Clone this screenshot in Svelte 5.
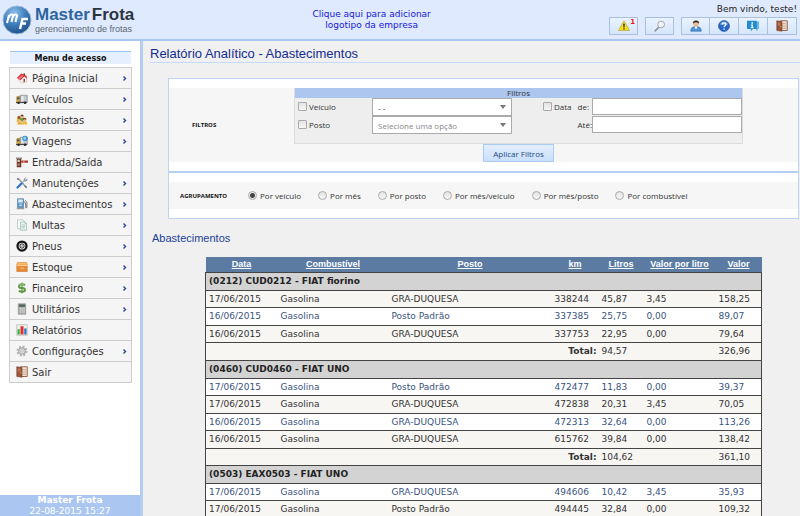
<script>
  const menu = [
    { icon: "home", label: "Página Inicial", sub: true },
    { icon: "truck", label: "Veículos", sub: true },
    { icon: "drivers", label: "Motoristas", sub: true },
    { icon: "trip", label: "Viagens", sub: true },
    { icon: "gate", label: "Entrada/Saída", sub: false },
    { icon: "tools", label: "Manutenções", sub: true },
    { icon: "pump", label: "Abastecimentos", sub: true },
    { icon: "papers", label: "Multas", sub: true },
    { icon: "tire", label: "Pneus", sub: true },
    { icon: "box", label: "Estoque", sub: true },
    { icon: "money", label: "Financeiro", sub: true },
    { icon: "calc", label: "Utilitários", sub: true },
    { icon: "chart", label: "Relatórios", sub: false },
    { icon: "gear", label: "Configurações", sub: true },
    { icon: "door", label: "Sair", sub: false },
  ];

  const userButtons = [
    { icon: "user", label: "Meus dados" },
    { icon: "help", label: "Ajuda" },
    { icon: "info", label: "Informações" },
    { icon: "door", label: "Sair" },
  ];

  const agrupamentos = [
    "Por veículo",
    "Por mês",
    "Por posto",
    "Por mês/veículo",
    "Por mês/posto",
    "Por combustível",
  ];

  const colunas = ["Data", "Combustível", "Posto", "km", "Litros", "Valor por litro", "Valor"];

  const grupos = [
    {
      titulo: "(0212) CUD0212 - FIAT fiorino",
      linhas: [
        ["17/06/2015", "Gasolina", "GRA-DUQUESA", "338244", "45,87", "3,45", "158,25"],
        ["16/06/2015", "Gasolina", "Posto Padrão", "337385", "25,75", "0,00", "89,07"],
        ["16/06/2015", "Gasolina", "GRA-DUQUESA", "337753", "22,95", "0,00", "79,64"],
      ],
      primeiraAzul: false,
      total: ["94,57", "326,96"],
    },
    {
      titulo: "(0460) CUD0460 - FIAT UNO",
      linhas: [
        ["17/06/2015", "Gasolina", "Posto Padrão", "472477", "11,83", "0,00", "39,37"],
        ["17/06/2015", "Gasolina", "GRA-DUQUESA", "472838", "20,31", "3,45", "70,05"],
        ["16/06/2015", "Gasolina", "GRA-DUQUESA", "472313", "32,64", "0,00", "113,26"],
        ["16/06/2015", "Gasolina", "GRA-DUQUESA", "615762", "39,84", "0,00", "138,42"],
      ],
      primeiraAzul: true,
      total: ["104,62", "361,10"],
    },
    {
      titulo: "(0503) EAX0503 - FIAT UNO",
      linhas: [
        ["17/06/2015", "Gasolina", "GRA-DUQUESA", "494606", "10,42", "3,45", "35,93"],
        ["17/06/2015", "Gasolina", "Posto Padrão", "494445", "32,84", "0,00", "109,32"],
      ],
      primeiraAzul: true,
      total: null,
    },
  ];

  let agrupamento = $state("Por veículo");
  let veiculo = $state("");
  let posto = $state("");
  let usarVeiculo = $state(false);
  let usarPosto = $state(false);
  let usarData = $state(false);
  let dataDe = $state("");
  let dataAte = $state("");

  function azul(grupo, i) {
    return grupo.primeiraAzul ? i % 2 === 0 : i % 2 === 1;
  }
</script>

{#snippet icone(name)}
  <svg class="icon" viewBox="0 0 16 16" aria-hidden="true">
    {#if name === "home"}
      <path d="M4 8l7-3 3 3v5l-6 2-4-3z" fill="#f6f1ef" stroke="#b9a9a5" stroke-width=".6" />
      <path d="M1 8l6-6 7 3 1 4-4-3-5 5z" fill="#d3353a" />
      <path d="M3 8l5-4 2 1-5 5z" fill="#f07c7c" />
      <path d="M10 9h2v4l-2 1z" fill="#8d4b3c" />
      <path d="M10 2h2v3l-2-1z" fill="#8b2020" />
    {:else if name === "truck" || name === "trip"}
      <path d="M6 3h9v9H6z" fill="#c3c7cc" stroke="#777e88" stroke-width=".8" />
      <path d="M7 4h3v7H7z" fill="#e9ebee" />
      <path d="M1 5l4-1v9H1z" fill="#eeb637" stroke="#8b6a24" stroke-width=".7" />
      <path d="M1.500 6L4.500 5.500v3h-3z" fill="#3e5476" />
      <path d="M0 12h15v1.500H0z" fill="#4b4b52" />
      <circle cx="3.500" cy="13" r="1.700" fill="#292929" />
      <circle cx="12" cy="13" r="1.700" fill="#292929" />
      {#if name === "trip"}
        <circle cx="12" cy="4.500" r="3.600" fill="#3c8fd0" />
        <path d="M9.500 4l2-2 1 1 2 1-2 1v2l-2-1z" fill="#9bdcf2" />
      {/if}
    {:else if name === "drivers"}
      <path d="M1 9q0-4 3-4t3 4v2H1z" fill="#e4b72e" />
      <circle cx="4" cy="4.500" r="2.200" fill="#96582e" />
      <path d="M5 8q0-4 3-4t4 4v2H5z" fill="#5b9b4b" />
      <circle cx="8" cy="3.500" r="2.300" fill="#edbd8d" />
      <path d="M5.800 3q0-2.500 2.200-2.500T10.300 3z" fill="#674020" />
      <path d="M8 14q0-5 3.500-5t3.500 5z" fill="#e8bf3d" />
      <circle cx="11.500" cy="8" r="2.400" fill="#efbd8e" />
      <path d="M9 8q0-3 2.500-3T14 8l-2-1z" fill="#80471f" />
      <path d="M2 14q0-4 3-4t3 4z" fill="#e8a52d" />
      <circle cx="5" cy="9.500" r="2" fill="#efc08f" />
    {:else if name === "gate"}
      <path d="M1 3h6v12H1z" fill="#6a3526" />
      <path d="M2 5h3v3H2z" fill="#ddd3ca" />
      <path d="M2 10h3v3H2z" fill="#b6897b" />
      <path d="M0 2h8v2H0z" fill="#918a85" />
      <path d="M7 6h9v3H7z" fill="#b0382c" />
      <path d="M10 6h1v3h-1z" fill="#f0dcd8" />
    {:else if name === "tools"}
      <path d="M3 2l10 11" stroke="#9ba1a8" stroke-width="2" />
      <path d="M1 1l3 1v2l-2 0zM12 11l3 2-1 2-3-2z" fill="#707c8a" />
      <path d="M2 14l6-6" stroke="#2f73cf" stroke-width="3" stroke-linecap="round" />
      <path d="M8 8l4-4" stroke="#aeb5be" stroke-width="2" />
      <path d="M11 2q2-2 3-1l-2 2 1 1 2-2q1 3-2 4-2 0-3-2z" fill="#8d98a4" />
    {:else if name === "pump"}
      <path d="M2 1h8v12H2z" fill="#5999cc" stroke="#52718a" stroke-width=".8" />
      <path d="M3 2h6v4H3z" fill="#d9edf8" />
      <path d="M4 8h4M4 10h4" stroke="#d3e8f4" />
      <path d="M1 13h10v2H1z" fill="#949ca3" />
      <path d="M10 5q3 0 3 4v3q0 2 1.500 1V6l-2-3" fill="none" stroke="#626b72" stroke-width="1.200" />
    {:else if name === "papers"}
      <path d="M2 1h7l2 2v10H2z" fill="#f3f9f7" stroke="#9bb5ae" stroke-width=".8" />
      <path d="M6 4h6l2 2v9H6z" fill="#e8f4f0" stroke="#8faaa2" stroke-width=".8" />
      <path d="M12 4v2h2M7.500 8h5M7.500 10h5M7.500 12h4" stroke="#a9c2ba" fill="none" />
    {:else if name === "tire"}
      <circle cx="8" cy="8" r="7.500" fill="#141414" />
      <circle cx="8" cy="8" r="4.500" fill="#dcdcdc" />
      <path d="M8 4v8M4 8h8M5.200 5.200l5.600 5.600M10.800 5.200l-5.600 5.600" stroke="#222" stroke-width="1.100" />
      <circle cx="8" cy="8" r="1.300" fill="#eee" />
    {:else if name === "box"}
      <path d="M2 2h12l1 3v9H1V5z" fill="#e58a34" stroke="#c66d20" stroke-width=".7" />
      <path d="M2 2h12l1 3H1z" fill="#f7b96b" />
      <path d="M1 6h14" stroke="#ffe0b5" />
      <path d="M5 9h6v1H5z" fill="#f9c98e" />
    {:else if name === "money"}
      <path
        d="M12 4.500Q11 3 8 3 4 3 4 5.500T8 8t4 2.700Q12 13 8 13 5 13 4 11.500"
        fill="none" stroke="#5d9640" stroke-width="2.600"
      />
      <path d="M8 1v14" stroke="#5d9640" stroke-width="1.600" />
      <path d="M11 4Q10 3 8 3 5 3 5 5" fill="none" stroke="#a6d277" stroke-width=".9" />
    {:else if name === "calc"}
      <path d="M3 1h10v14H3z" fill="#a5aaa7" stroke="#7b817d" stroke-width=".7" />
      <path d="M4 2h8v3H4z" fill="#4d6155" />
      <path d="M5 7h1.500M7.500 7H9M10 7h1.500M5 9.500h1.500M7.500 9.500H9M10 9.500h1.500M5 12h1.500M7.500 12H9M10 12h1.500" stroke="#f3f3f3" stroke-width="1.300" />
    {:else if name === "chart"}
      <path d="M1 1h14v14H1z" fill="#f1f1ef" stroke="#aaa" stroke-width=".8" />
      <path d="M2 7h3v7H2z" fill="#38ad45" />
      <path d="M6 3h4v11H6z" fill="#de2f2b" />
      <path d="M11 6h3v8h-3z" fill="#2974c8" />
    {:else if name === "gear"}
      <circle cx="8" cy="8" r="6" fill="none" stroke="#b4b4b4" stroke-width="2.600" stroke-dasharray="2.700 2" />
      <circle cx="8" cy="8" r="4.300" fill="#dedede" stroke="#a6a6a6" stroke-width="1.600" />
      <circle cx="8" cy="8" r="1.600" fill="#fff" stroke="#999" stroke-width=".8" />
    {:else if name === "door"}
      <path d="M6 1h9v13H6z" fill="#f0e2d5" stroke="#8b5a43" stroke-width="1.200" />
      <path d="M8 5h6M8 8h6M8 11h6" stroke="#c9a68d" stroke-width="1.500" />
      <path d="M1 1l7 1v13l-7-1z" fill="#9b563b" stroke="#6b3424" stroke-width=".7" />
      <path d="M2.500 3l3.500.5v4L2.500 7z" fill="#bb7653" />
      <circle cx="6.500" cy="9" r=".8" fill="#f1d174" />
    {:else if name === "warning"}
      <path d="M8 1l7.500 13H.5z" fill="#f4dc24" stroke="#b29f24" stroke-width=".8" stroke-linejoin="round" />
      <path d="M7 5h2l-.4 5H7.400zM7.200 11h1.600v1.600H7.200z" fill="#1c1c1c" />
    {:else if name === "search"}
      <path d="M6.500 9.500l-5 5" stroke="#8c8f93" stroke-width="2" stroke-linecap="round" />
      <circle cx="9.500" cy="6" r="4.500" fill="#eef4fa" stroke="#a3a7ab" stroke-width="1.300" />
    {:else if name === "user"}
      <path d="M1 15q0-6 5-6h4q5 0 5 6z" fill="#5294d6" stroke="#2c64a4" stroke-width=".7" />
      <path d="M6 9l2 4 2-4z" fill="#fff" />
      <circle cx="8" cy="5" r="3.500" fill="#efbd91" />
      <path d="M4 5q-.5-4.500 4-4.500T12 5q-1-2-4-2T4 5z" fill="#3b2a22" />
    {:else if name === "help"}
      <circle cx="8" cy="8" r="7.300" fill="#2666c4" stroke="#154793" stroke-width=".8" />
      <path d="M2.500 6q1-4 5.500-4t5.500 4q-5 2-11 0z" fill="#6ea2e2" />
      <path d="M5.700 6q0-2.200 2.400-2.200T10.500 6Q10.500 7 9 8q-.9.600-.9 1.800M8.100 11.200V13" fill="none" stroke="#fff" stroke-width="1.700" />
    {:else if name === "info"}
      <path d="M4 2h12v10h-2v3l-3-3H4z" fill="#66b8e6" />
      <path d="M0 1h13v11H8l-3 3v-3H0z" fill="#238bcf" />
      <path d="M6 3h2v2H6zM5 6h3v4h1v1H5v-1h1V7H5z" fill="#fff" />
    {/if}
  </svg>
{/snippet}

<div class="page">
  <header class="topbar">
    <a class="brand" href="#inicio">
      <svg class="brand-mark" viewBox="0 0 30 30" aria-hidden="true">
        <defs>
          <radialGradient id="orb" cx=".4" cy=".25" r=".8">
            <stop offset="0" stop-color="#8fc0ea" />
            <stop offset=".5" stop-color="#3f7fbe" />
            <stop offset="1" stop-color="#1d4c86" />
          </radialGradient>
        </defs>
        <circle cx="15" cy="15" r="14" fill="url(#orb)" stroke="#9cb9d6" />
        <path
          d="M5 18l2-8M6.500 13q1.500-4 3.500-3.500t.500 3L9.500 17M10.500 13q1.500-4 3.500-3.500t.500 3L13.500 17"
          fill="none" stroke="#fff" stroke-width="2"
        />
        <path d="M18 24l2.500-10H26M19 18.500h5" fill="none" stroke="#fff" stroke-width="2.400" />
      </svg>
      <span class="brand-text">
        <span class="brand-name"><span class="brand-blue">Master</span><span>Frota</span></span>
        <span class="brand-sub">gerenciamento de frotas</span>
      </span>
    </a>
    <a class="company" href="#logotipo">Clique aqui para adicionar<br />logotipo da empresa</a>
    <div class="account">
      <span class="welcome">Bem vindo, teste!</span>
      <div class="toolbar">
        <button class="tool" aria-label="Alertas">
          {@render icone("warning")}
          <span class="count">1</span>
        </button>
        <button class="tool" aria-label="Pesquisar">{@render icone("search")}</button>
        <div class="tool-group">
          {#each userButtons as b}
            <button class="tool" aria-label={b.label}>{@render icone(b.icon)}</button>
          {/each}
        </div>
      </div>
    </div>
  </header>

  <div class="body">
    <aside class="sidebar">
      <nav>
        <h2>Menu de acesso</h2>
        <ul>
          {#each menu as item}
            <li>
              <a href="#{item.icon}">
                {@render icone(item.icon)}
                <span class="menu-label">{item.label}</span>
                {#if item.sub}
                  <svg class="chevron" viewBox="0 0 4 5" aria-hidden="true">
                    <path d="M.5.5l2 2-2 2" fill="none" stroke="#2b45a0" stroke-width="1.400" />
                  </svg>
                {/if}
              </a>
            </li>
          {/each}
        </ul>
      </nav>
      <footer>
        <strong>Master Frota</strong>
        <span>22-08-2015 15:27</span>
      </footer>
    </aside>

    <main>
      <h1>Relatório Analítico - Abastecimentos</h1>

      <form class="panel" onsubmit={(e) => e.preventDefault()}>
        <section class="panel-part">
          <div class="band filter-band">
            <span class="band-title">FILTROS</span>
            <div class="filter-area">
              <fieldset class="filters">
                <legend>Filtros</legend>
                <div class="filter-grid">
                  <label class="check"><input type="checkbox" bind:checked={usarVeiculo} />Veículo</label>
                  <div class="select">
                    <select aria-label="Veículo" bind:value={veiculo}>
                      <option value="">- -</option>
                      <option value="0212">CUD0212</option>
                      <option value="0460">CUD0460</option>
                    </select>
                    <svg class="caret" viewBox="0 0 6 4" aria-hidden="true"><path d="M0 0h6L3 4z" fill="#777" /></svg>
                  </div>
                  <div class="date-label">
                    <label class="check"><input type="checkbox" bind:checked={usarData} />Data</label>
                    <label for="data-de">de:</label>
                  </div>
                  <input id="data-de" class="date" type="text" bind:value={dataDe} />

                  <label class="check"><input type="checkbox" bind:checked={usarPosto} />Posto</label>
                  <div class="select placeholder">
                    <select aria-label="Posto" bind:value={posto}>
                      <option value="">Selecione uma opção</option>
                      <option value="gra">GRA-DUQUESA</option>
                      <option value="padrao">Posto Padrão</option>
                    </select>
                    <svg class="caret" viewBox="0 0 6 4" aria-hidden="true"><path d="M0 0h6L3 4z" fill="#777" /></svg>
                  </div>
                  <label class="until" for="data-ate">Até:</label>
                  <input id="data-ate" class="date" type="text" bind:value={dataAte} />
                </div>
              </fieldset>
              <button class="apply" type="submit">Aplicar Filtros</button>
            </div>
          </div>
        </section>

        <section class="panel-part">
          <div class="band group-band" role="radiogroup" aria-labelledby="agrupamento">
            <span id="agrupamento" class="band-title">AGRUPAMENTO</span>
            {#each agrupamentos as a}
              <label class="radio">
                <input type="radio" name="agrupamento" value={a} bind:group={agrupamento} />{a}
              </label>
            {/each}
          </div>
        </section>
      </form>

      <h2 class="section-title">Abastecimentos</h2>

      <table>
        <colgroup>
          <col class="c-data" />
          <col class="c-comb" />
          <col />
          <col class="c-km" />
          <col class="c-litros" />
          <col class="c-unit" />
          <col class="c-valor" />
        </colgroup>
        <thead>
          <tr>
            {#each colunas as c}
              <th scope="col"><a href="#ordenar">{c}</a></th>
            {/each}
          </tr>
        </thead>
        {#each grupos as g}
          <tbody>
            <tr class="group"><th colspan="7" scope="rowgroup">{g.titulo}</th></tr>
            {#each g.linhas as linha, i}
              <tr class:blue={azul(g, i)}>
                {#each linha as valor, j}
                  <td class:km={j === 3}>{valor}</td>
                {/each}
              </tr>
            {/each}
            {#if g.total}
              <tr>
                <th class="total" colspan="4" scope="row">Total:</th>
                <td colspan="2">{g.total[0]}</td>
                <td>{g.total[1]}</td>
              </tr>
            {/if}
          </tbody>
        {/each}
      </table>
    </main>
  </div>
</div>

<style>
  :global(body) {
    background: #f0f0f0;
  }
  .page {
    height: 100vh;
    display: flex;
    flex-direction: column;
    overflow: hidden;
    font-family: "DejaVu Sans", Verdana, sans-serif;
    font-size: 9px;
    color: #333;
  }
  .page :global(*) {
    box-sizing: border-box;
  }
  a {
    color: inherit;
    text-decoration: none;
  }
  h1,
  h2,
  ul,
  fieldset {
    margin: 0;
    padding: 0;
  }
  button,
  input,
  select {
    font: inherit;
    color: inherit;
    margin: 0;
  }
  .icon {
    display: block;
    width: 12px;
    height: 12px;
    flex: none;
  }

  .topbar {
    flex: none;
    height: 41px;
    display: flex;
    justify-content: space-between;
    background: #dfeafe;
    border-bottom: 2px solid #a9c7f2;
  }
  .brand {
    display: flex;
    align-items: center;
    gap: 3px;
    padding-left: 2px;
    font-family: "Liberation Sans", Arial, sans-serif;
  }
  .brand-mark {
    width: 30px;
    height: 30px;
  }
  .brand-text {
    display: flex;
    flex-direction: column;
  }
  .brand-name {
    display: flex;
    font-size: 17px;
    line-height: 19px;
    font-weight: bold;
    color: #2c3440;
  }
  .brand-blue {
    padding-right: 2px;
    color: #2d64a0;
  }
  .brand-sub {
    font-size: 9px;
    line-height: 10px;
    color: #5c6672;
  }
  .company {
    padding-top: 9px;
    line-height: 11px;
    text-align: center;
    color: #1717d8;
  }
  .account {
    display: flex;
    flex-direction: column;
    align-items: flex-end;
    padding: 4px 3px 0 0;
    gap: 3px;
  }
  .welcome {
    line-height: 10px;
    color: #222;
  }
  .toolbar {
    display: flex;
    gap: 7px;
  }
  .tool-group {
    display: flex;
  }
  .tool {
    display: flex;
    align-items: center;
    justify-content: center;
    position: relative;
    width: 29px;
    height: 18px;
    padding: 0;
    border: 1px solid #a9c1dd;
    background: linear-gradient(#eaf2fe, #d6e6fb);
    cursor: pointer;
  }
  .tool-group .tool + .tool {
    border-left: 0;
  }
  .count {
    position: absolute;
    top: 0;
    right: 2px;
    font-size: 7px;
    line-height: 8px;
    font-weight: bold;
    color: #f01818;
  }

  .body {
    flex: 1;
    min-height: 0;
    display: flex;
  }
  .sidebar {
    flex: none;
    width: 143px;
    display: flex;
    flex-direction: column;
    justify-content: space-between;
    background: #fff;
    border-right: 3px solid #b3cdf3;
  }
  nav {
    padding: 10px 8px 0 9px;
  }
  nav h2 {
    height: 13px;
    margin: 0 1px 3px;
    border-top: 1px solid #9fc3f0;
    background: #e6effd;
    font-size: 8px;
    line-height: 13px;
    text-align: center;
    color: #111;
  }
  nav ul {
    list-style: none;
    border: 1px solid #ccc;
    border-bottom: 0;
  }
  nav li a {
    display: flex;
    align-items: center;
    gap: 4px;
    height: 21px;
    padding: 0 4px 0 6px;
    border-bottom: 1px solid #ccc;
    background: #f5f5f5;
    font-size: 10px;
  }
  nav li a:hover {
    background: #e6effd;
  }
  .menu-label {
    flex: 1;
    white-space: nowrap;
  }
  .chevron {
    width: 4px;
    height: 5px;
  }
  .sidebar footer {
    display: flex;
    flex-direction: column;
    height: 21px;
    background: #abc7f1;
    line-height: 11px;
    text-align: center;
    color: #fff;
  }

  main {
    flex: 1;
    min-width: 0;
    padding: 5px 0 0 7px;
    background: #f0f0f0;
  }
  h1,
  .section-title {
    font-family: "Liberation Sans", Arial, sans-serif;
    font-weight: normal;
    color: #22409a;
  }
  h1 {
    border-bottom: 1px solid #c3dbf8;
    font-size: 13px;
    line-height: 16px;
    color: #142c90;
  }
  .section-title {
    padding: 12px 0 11px 2px;
    font-size: 11px;
    line-height: 15px;
  }

  .panel {
    margin: 15px 1px 0 18px;
    border: 1px solid #bdd3f4;
    background: #fff;
    font-family: "Open Sans", "Noto Sans", sans-serif;
    font-size: 8px;
  }
  .panel-part {
    padding: 9px 0;
  }
  .panel-part + .panel-part {
    border-top: 2px solid #b5cef3;
  }
  .band {
    display: flex;
    background: #f6f6f6;
  }
  .band-title {
    font-size: 6px;
    font-weight: bold;
    color: #111;
  }
  .filter-band {
    align-items: center;
    padding-right: 55px;
  }
  .filter-band .band-title {
    width: 125px;
    padding-left: 23px;
  }
  .filter-area {
    flex: 1;
    display: flex;
    flex-direction: column;
    align-items: center;
  }
  .filters {
    width: 100%;
    min-width: 0;
    border: 1px solid #ddd;
    border-width: 0 1px 1px;
    background: #eee;
  }
  legend {
    float: left;
    width: 100%;
    padding: 0;
    background: #adc6ef;
    line-height: 10px;
    text-align: center;
  }
  .filter-grid {
    clear: both;
    display: grid;
    grid-template-columns: 77px 140px 1fr 150px;
    grid-auto-rows: 17px;
    row-gap: 1px;
    padding-bottom: 10px;
  }
  .check {
    display: flex;
    align-items: center;
    gap: 2px;
  }
  .filter-grid > .check {
    padding-left: 3px;
  }
  input[type="checkbox"],
  input[type="radio"] {
    appearance: none;
    width: 9px;
    height: 9px;
    border: 1px solid #aaa;
    background: linear-gradient(#e4e4e4, #f6f6f6);
  }
  input[type="checkbox"] {
    border-radius: 1px;
  }
  input[type="checkbox"]:checked {
    background: #567;
  }
  input[type="radio"] {
    border-radius: 50%;
  }
  input[type="radio"]:checked {
    background: radial-gradient(circle, #444 2px, #eee 3px);
  }
  .select {
    position: relative;
  }
  .select select {
    appearance: none;
    width: 100%;
    height: 18px;
    padding: 0 16px 0 5px;
    border: 1px solid #aaa;
    border-radius: 0;
    background: #fff;
    display: block;
  }
  .placeholder select {
    color: #888;
  }
  .caret {
    position: absolute;
    right: 6px;
    top: 7px;
    width: 6px;
    height: 4px;
    pointer-events: none;
  }
  .date-label {
    display: flex;
    align-items: center;
    justify-content: flex-end;
    gap: 6px;
    padding-right: 3px;
  }
  .until {
    text-align: right;
    line-height: 17px;
  }
  .date {
    width: 100%;
    height: 17px;
    padding: 0 3px;
    border: 1px solid #aaa;
    background: #fff;
  }
  .apply {
    height: 18px;
    padding: 0 9px;
    border: 1px solid #a9cbf5;
    background: linear-gradient(#e3effd, #c9e0fc);
    color: #24477c;
    cursor: pointer;
  }
  .group-band {
    align-items: center;
    gap: 17px;
    height: 27px;
    padding-left: 11px;
    white-space: nowrap;
  }
  .group-band .band-title {
    padding-right: 4px;
  }
  .radio {
    display: flex;
    align-items: center;
    gap: 3px;
  }

  table {
    width: calc(100% - 93px);
    margin-left: 55px;
    table-layout: fixed;
    border-collapse: collapse;
  }
  .c-data,
  .c-unit {
    width: 72px;
  }
  .c-comb {
    width: 111px;
  }
  .c-km {
    width: 47px;
  }
  .c-litros {
    width: 45px;
  }
  .c-valor {
    width: 46px;
  }
  th,
  td {
    padding: 0 3px;
    line-height: 12px;
    text-align: left;
    white-space: nowrap;
  }
  thead th {
    height: 15px;
    padding: 0;
    background: #5b7ba3;
    font-family: "Liberation Sans", Arial, sans-serif;
    text-align: center;
    color: #fff;
  }
  thead a {
    text-decoration: underline;
  }
  tbody {
    border: 1px solid #444;
  }
  tbody tr {
    height: 17px;
    border-top: 1px solid #444;
    background: #f7f6f3;
  }
  tbody tr:nth-child(odd) {
    height: 18px;
  }
  tbody .group {
    background: #d3d3d3;
    color: #222;
  }
  tbody .blue {
    background: #fff;
    color: #3a5380;
  }
  td.km {
    padding-right: 10px;
    text-align: right;
  }
  th.total {
    padding-right: 2px;
    text-align: right;
  }
</style>
